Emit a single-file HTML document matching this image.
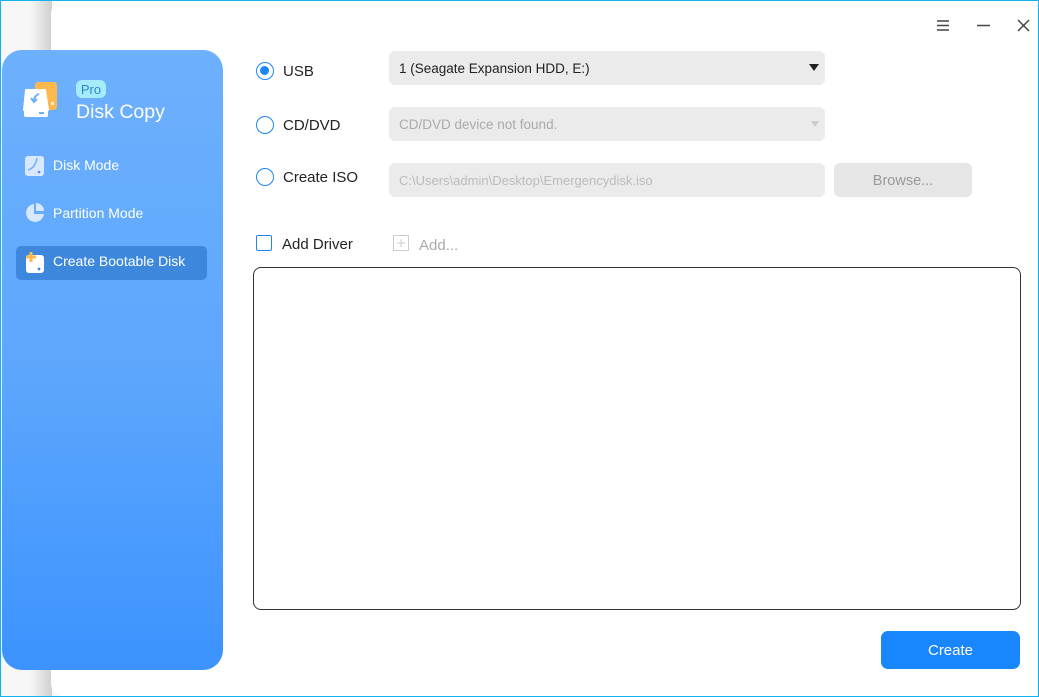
<!DOCTYPE html>
<html><head><meta charset="utf-8"><style>
*{margin:0;padding:0;box-sizing:border-box}
body{width:1039px;height:697px;position:relative;overflow:hidden;font-family:"Segoe UI","Liberation Sans",sans-serif;background:#f7f7f7}
.frame{position:absolute;inset:0;border:1.5px solid #12b2f0;z-index:10;pointer-events:none}
.shadow{position:absolute;left:30px;top:0;width:22px;height:697px;background:linear-gradient(90deg,#f7f7f7,#cfcfcf)}
.main{position:absolute;left:51px;top:0;right:0;bottom:0;background:#fff;border-radius:14px 0 0 14px}
.side{position:absolute;left:2px;top:50px;width:221px;height:620px;border-radius:20px;background:linear-gradient(180deg,#6db0fd 0%,#5ea7fd 50%,#3c93fe 100%)}
.a{position:absolute;color:#fff}
.nav{position:absolute;left:53px;font-size:14px;color:#fff}
.sel{position:absolute;left:16px;top:246px;width:191px;height:34px;background:#3d88dd;border-radius:5px}
.t{position:absolute;font-size:15px;color:#222}
.radio{position:absolute;left:256px;width:18px;height:18px;border:1.5px solid #1b86f5;border-radius:50%}
.box{position:absolute;left:389px;width:436px;height:34px;background:#ebebeb;border-radius:6px;font-size:13.5px;padding:0 10px;line-height:36px}
</style></head><body>
<div class="frame"></div>
<div class="shadow"></div>
<div class="main"></div>
<div class="side"></div>
<svg style="position:absolute;left:22px;top:80px" width="38" height="40" viewBox="0 0 38 40">
<rect x="13" y="2" width="22" height="28" rx="3" fill="#fdb94e"/>
<rect x="29" y="22" width="3" height="3" fill="#fff" opacity=".8"/>
<path d="M4 10h19l3 20H2z" fill="#fff" stroke="#fff" stroke-width="2" stroke-linejoin="round"/>
<rect x="2" y="29" width="24" height="8" rx="2" fill="#fff"/>
<rect x="17" y="32" width="5" height="2" fill="#6db0fd"/>
<path d="M17 14c-3 1-5 3-5 7M9 18l3 4 3-3" stroke="#6db0fd" stroke-width="2" fill="none"/>
</svg>
<div class="a" style="left:76px;top:80px;width:30px;height:18px;background:#a6ebfc;border-radius:6px;color:#2a88c5;font-size:13px;text-align:center;line-height:19px">Pro</div>
<div class="a" style="left:76px;top:101px;font-size:19.5px">Disk Copy</div>
<svg style="position:absolute;left:25px;top:156px" width="19" height="20"><rect x="0" y="0" width="19" height="20" rx="3" fill="#d8e9ff"/><path d="M3 14C7 13 11 9 12 2" stroke="#6db0fd" stroke-width="1.5" fill="none"/><circle cx="14" cy="16" r="1.3" fill="#4a8ce6"/></svg>
<div class="nav" style="top:157px">Disk Mode</div>
<svg style="position:absolute;left:25px;top:203px" width="20" height="20"><path d="M9 1A9 9 0 1 0 19 11H9z" fill="#d8e9ff"/><path d="M11 0A8 8 0 0 1 19 8h-8z" fill="#d8e9ff"/></svg>
<div class="nav" style="top:205px">Partition Mode</div>
<div class="sel"></div>
<svg style="position:absolute;left:25px;top:252px" width="20" height="22"><rect x="1" y="3" width="18" height="18" rx="3" fill="#fff"/><circle cx="14" cy="17" r="1.4" fill="#3d88dd"/><path d="M6 0v10M1 5h10" stroke="#fdb94e" stroke-width="3"/></svg>
<div class="nav" style="top:253px">Create Bootable Disk</div>

<svg style="position:absolute;left:936px;top:18px" width="100" height="16">
<path d="M1 3h12M1 7.5h12M1 12h12" stroke="#444" stroke-width="1.5"/>
<path d="M41 7.5h13" stroke="#444" stroke-width="1.5"/>
<path d="M82 2l11 11M93 2l-11 11" stroke="#444" stroke-width="1.5"/>
</svg>

<div class="radio" style="top:62px"><div style="position:absolute;left:3px;top:3px;width:9px;height:9px;border-radius:50%;background:#1b86f5"></div></div>
<div class="t" style="left:283px;top:63px">USB</div>
<div class="radio" style="top:116px"></div>
<div class="t" style="left:283px;top:117px">CD/DVD</div>
<div class="radio" style="top:168px"></div>
<div class="t" style="left:283px;top:169px">Create ISO</div>
<div class="box" style="top:51px;color:#222">1 (Seagate Expansion HDD, E:)<span style="position:absolute;right:6px;top:13px;border:5px solid transparent;border-top:7px solid #222;border-bottom:0"></span></div>
<div class="box" style="top:107px;color:#aaa">CD/DVD device not found.<span style="position:absolute;right:6px;top:14px;border:4px solid transparent;border-top:6px solid #ccc;border-bottom:0"></span></div>
<div class="box" style="top:163px;color:#bbb;font-size:13px">C:\Users\admin\Desktop\Emergencydisk.iso</div>
<div style="position:absolute;left:834px;top:163px;width:138px;height:34px;background:#e6e6e6;border-radius:6px;color:#999;font-size:14.5px;text-align:center;line-height:36px">Browse...</div>
<div style="position:absolute;left:256px;top:235px;width:16px;height:16px;border:1.5px solid #1b86f5;border-radius:2px"></div>
<div class="t" style="left:282px;top:236px">Add Driver</div>
<svg style="position:absolute;left:393px;top:235px" width="16" height="16"><rect x=".5" y=".5" width="15" height="15" fill="none" stroke="#ccc"/><path d="M8 4v8M4 8h8" stroke="#ccc"/></svg>
<div class="t" style="left:419px;top:237px;color:#aaa">Add...</div>
<div style="position:absolute;left:253px;top:267px;width:768px;height:343px;border:1px solid #333;border-radius:8px"></div>
<div style="position:absolute;left:881px;top:631px;width:139px;height:38px;background:#1a86fe;border-radius:7px;color:#fff;font-size:15px;text-align:center;line-height:40px">Create</div>
</body></html>
